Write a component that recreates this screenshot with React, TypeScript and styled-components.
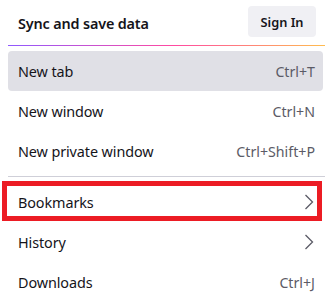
import React from 'react';
import styled, { createGlobalStyle } from 'styled-components';

const GlobalStyle = createGlobalStyle`
  html, body {
    margin: 0;
    padding: 0;
    background: #ffffff;
    overflow: hidden;
  }
  body {
    font-family: 'Noto Sans', 'Segoe UI', sans-serif;
    color: #15141a;
  }
`;

const Panel = styled.div`
  width: 325px;
  display: flex;
  flex-direction: column;
`;

const Header = styled.div`
  display: flex;
  align-items: center;
  justify-content: space-between;
  height: 45px;
  padding: 0 9px 0 18px;
  box-sizing: border-box;
`;

const Title = styled.span`
  font-size: 14.4px;
  font-weight: 600;
  padding-top: 2px;
  letter-spacing: -0.15px;
`;

const SignInButton = styled.button`
  width: 68px;
  height: 31px;
  margin-top: -2px;
  border: none;
  border-radius: 4px;
  background: #f0f0f4;
  color: #15141a;
  font-family: inherit;
  font-size: 12.8px;
  font-weight: 600;
  cursor: pointer;
`;

const GradientLine = styled.div`
  height: 1px;
  margin-left: 8px;
  background: linear-gradient(90deg, #9059ff 0%, #ff4aa2 52%, #ffbd4f 100%);
`;

const Section = styled.div<{ $first?: boolean }>`
  display: flex;
  flex-direction: column;
  padding: ${(p) => (p.$first ? '5px' : '0')} 2px 0 8px;
`;

const Separator = styled.div`
  height: 1px;
  margin: 5px 0 5px 8px;
  background: #cfcfd8;
`;

const Row = styled.div<{ $active?: boolean; $marked?: boolean }>`
  position: relative;
  display: flex;
  align-items: center;
  justify-content: space-between;
  height: 40px;
  padding: 0 8px 0 10px;
  border-radius: 4px;
  background: ${(p) => (p.$active ? '#e0e0e6' : 'transparent')};
  font-size: 14.4px;

  ${(p) =>
    p.$marked &&
    `
    &::after {
      content: '';
      position: absolute;
      left: -6px;
      right: 1px;
      top: -1px;
      bottom: 1px;
      border: 5px solid #ec1c24;
      pointer-events: none;
    }
  `}
`;

const Label = styled.span`
  letter-spacing: -0.1px;
`;

const Shortcut = styled.span`
  color: #5b5b66;
  font-size: 14.2px;
`;

const Chevron = () => (
  <svg width="10" height="16" viewBox="0 0 10 16" style={{ marginRight: 1 }}>
    <path d="M1.5 1 L8.5 8 L1.5 15" fill="none" stroke="#5b5b66" strokeWidth="1.3" />
  </svg>
);

const topItems = [
  { label: 'New tab', shortcut: 'Ctrl+T', active: true },
  { label: 'New window', shortcut: 'Ctrl+N' },
  { label: 'New private window', shortcut: 'Ctrl+Shift+P' },
];

const bottomItems = [
  { label: 'Bookmarks', sub: true, marked: true },
  { label: 'History', sub: true },
  { label: 'Downloads', shortcut: 'Ctrl+J' },
];

export default function App() {
  return (
    <>
      <GlobalStyle />
      <Panel>
        <Header>
          <Title>Sync and save data</Title>
          <SignInButton>Sign In</SignInButton>
        </Header>
        <GradientLine />
        <Section $first>
          {topItems.map((item) => (
            <Row key={item.label} $active={item.active}>
              <Label>{item.label}</Label>
              <Shortcut>{item.shortcut}</Shortcut>
            </Row>
          ))}
        </Section>
        <Separator />
        <Section>
          {bottomItems.map((item) => (
            <Row key={item.label} $marked={item.marked}>
              <Label>{item.label}</Label>
              {item.sub ? <Chevron /> : <Shortcut>{item.shortcut}</Shortcut>}
            </Row>
          ))}
        </Section>
      </Panel>
    </>
  );
}
